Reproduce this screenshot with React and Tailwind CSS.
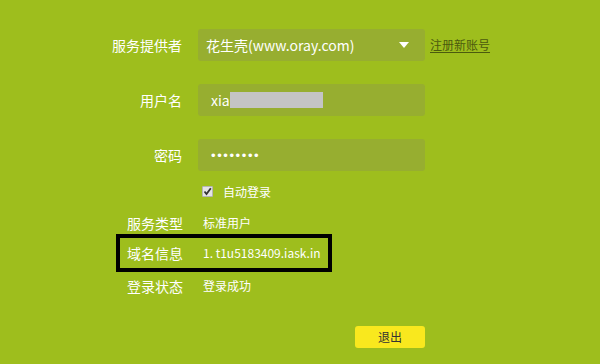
export default function App() {
  const font = { fontFamily: '"Noto Sans CJK SC", "Open Sans", sans-serif' };
  return (
    <div className="w-[600px] h-[364px] bg-[#9ebe1d] overflow-hidden text-white" style={font}>
      <div className="flex flex-col pt-[29px]">
        {/* Provider */}
        <div className="flex items-center h-[32px]">
          <div className="w-[182px] text-right text-[14px] leading-none">服务提供者</div>
          <div className="ml-[16px] w-[227px] h-[32px] bg-[#97ae30] rounded-[3px] flex items-center pl-[8px] pr-[16px]">
            <span className="text-[14px] leading-none flex-1">花生壳(www.oray.com)</span>
            <svg width="10" height="6" viewBox="0 0 10 6"><path d="M0 0 L10 0 L5 6 Z" fill="#ffffff" /></svg>
          </div>
          <a className="ml-[5px] text-[12px] leading-none text-[#4b5a0e] underline underline-offset-2">注册新账号</a>
        </div>
        {/* Username */}
        <div className="flex items-center h-[32px] mt-[23px]">
          <div className="w-[182px] text-right text-[14px] leading-none">用户名</div>
          <div className="ml-[16px] w-[227px] h-[32px] bg-[#97ae30] rounded-[3px] flex items-center pl-[13px]">
            <span className="text-[14px] leading-none">xia</span>
            <div className="w-[93px] h-[16px] bg-[#c4c4c4]"></div>
          </div>
        </div>
        {/* Password */}
        <div className="flex items-center h-[32px] mt-[23px]">
          <div className="w-[182px] text-right text-[14px] leading-none">密码</div>
          <div className="ml-[16px] w-[227px] h-[32px] bg-[#97ae30] rounded-[3px] flex items-center pl-[13px]">
            <span className="text-[13px] leading-none tracking-[1.6px]" style={{ fontFamily: '"Liberation Sans", sans-serif' }}>••••••••</span>
          </div>
        </div>
        {/* Auto login */}
        <div className="flex items-center h-[31px] mt-[5px]">
          <div className="ml-[202px] w-[11px] h-[11px] bg-[#e4e4e4] border border-[#b5b5b5] rounded-[1px] flex items-center justify-center">
            <svg width="9" height="9" viewBox="0 0 9 9"><path d="M1.5 4.5 L3.5 7 L7.8 1.2" stroke="#333" strokeWidth="1.8" fill="none" /></svg>
          </div>
          <span className="ml-[10px] text-[12px] leading-none">自动登录</span>
        </div>
        {/* Service type */}
        <div className="flex items-center h-[31px]">
          <div className="w-[183px] text-right text-[14px] leading-none">服务类型</div>
          <div className="ml-[20px] text-[12px] leading-none">标准用户</div>
        </div>
        {/* Domain info */}
        <div className="flex items-center h-[38px] ml-[116px] w-[216px] border-4 border-black mt-[-4px] mb-[-2px]">
          <div className="w-[63px] text-right text-[14px] leading-none">域名信息</div>
          <div className="ml-[20px] text-[12px] leading-none">1. t1u5183409.iask.in</div>
        </div>
        {/* Login status */}
        <div className="flex items-center h-[31px]">
          <div className="w-[183px] text-right text-[14px] leading-none">登录状态</div>
          <div className="ml-[20px] text-[12px] leading-none">登录成功</div>
        </div>
        {/* Logout */}
        <div className="flex mt-[25px]">
          <button className="ml-[355px] w-[70px] h-[22px] bg-[#f9e81e] rounded-[3px] text-[12px] leading-none text-[#333]">退出</button>
        </div>
      </div>
    </div>
  );
}
